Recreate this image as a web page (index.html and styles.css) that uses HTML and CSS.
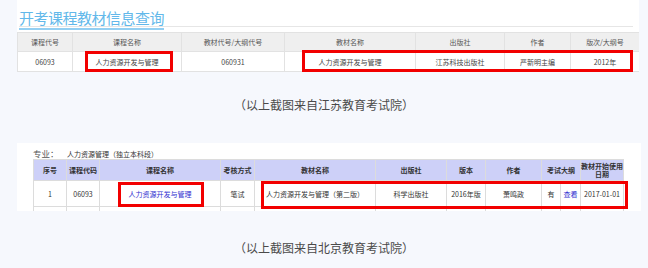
FILE: index.html
```html
<!DOCTYPE html>
<html lang="zh-CN">
<head>
<meta charset="utf-8">
<link rel="stylesheet" href="styles.css">
</head>
<body>
<div class="panel panel-js">
  <div class="title-bar"><span class="title">开考课程教材信息查询</span></div>
  <table class="t1">
    <colgroup>
      <col style="width:55px"><col style="width:109px"><col style="width:103px"><col style="width:131px"><col style="width:89px"><col style="width:66px"><col style="width:69px">
    </colgroup>
    <tr class="head"><th>课程代号</th><th>课程名称</th><th>教材代号/大纲代号</th><th>教材名称</th><th>出版社</th><th>作者</th><th>版次/大纲号</th></tr>
    <tr><td>06093</td><td>人力资源开发与管理</td><td>060931</td><td>人力资源开发与管理</td><td>江苏科技出版社</td><td>严新明主编</td><td>2012年</td></tr>
  </table>
  <div class="mark mark-a"></div>
  <div class="mark mark-b"></div>
</div>
<p class="caption cap1">（以上截图来自江苏教育考试院）</p>
<div class="panel panel-bj">
  <div class="major"><span class="major-label">专业：</span>人力资源管理（独立本科段）</div>
  <table class="t2">
    <colgroup>
      <col style="width:33px"><col style="width:33px"><col style="width:121px"><col style="width:34px"><col style="width:121px"><col style="width:71px"><col style="width:39px"><col style="width:56px"><col style="width:19px"><col style="width:20px"><col style="width:43px">
    </colgroup>
    <tr class="head"><th>序号</th><th>课程代码</th><th>课程名称</th><th>考核方式</th><th>教材名称</th><th>出版社</th><th>版本</th><th>作者</th><th colspan="2">考试大纲</th><th>教材开始使用日期</th></tr>
    <tr class="row"><td>1</td><td>06093</td><td class="link">人力资源开发与管理</td><td>笔试</td><td class="book">人力资源开发与管理（第二版）</td><td>科学出版社</td><td>2016年版</td><td>萧鸣政</td><td>有</td><td class="link">查看</td><td>2017-01-01</td></tr>
    <tr class="row"><td></td><td></td><td></td><td></td><td></td><td></td><td></td><td></td><td></td><td></td><td></td></tr>
  </table>
  <div class="mark mark-c"></div>
  <div class="mark mark-d"></div>
</div>
<p class="caption cap2">（以上截图来自北京教育考试院）</p>
</body>
</html>
```
FILE: styles.css
```css
html, body {
  margin: 0;
  padding: 0;
  background: #f6f8fd;
  font-family: "Noto Sans CJK SC", "Noto Sans", sans-serif;
}
.panel {
  position: relative;
  background: #fff;
  overflow: hidden;
}
.panel-js {
  margin: 0 9px 0 17px;
  height: 72px;
  padding-top: 5px;
  box-sizing: border-box;
}
.title-bar {
  margin: 0 6px 0 2px;
  border-bottom: 1px solid #e6e6e6;
  height: 21px;
}
.title {
  display: inline-block;
  font-size: 15px;
  line-height: 18px;
  color: #62b8ea;
  border-bottom: 2px solid #93cff2;
  height: 19px;
  letter-spacing: -0.5px;
}
.t1 {
  margin-top: 5px;
  width: 622px;
  border-collapse: collapse;
  table-layout: fixed;
  font-size: 7px;
  color: #444;
}
.t1 th, .t1 td {
  border: 1px solid #e2e2e2;
  text-align: center;
  padding: 0;
  white-space: nowrap;
  overflow: hidden;
}
.t1 .head th {
  background: #efefef;
  font-weight: normal;
  color: #555;
  height: 18px;
}
.t1 td {
  height: 19px;
}
.mark {
  position: absolute;
  border: 3px solid #f20000;
  box-sizing: border-box;
}
.mark-a { left: 68px; top: 51px; width: 88px; height: 21px; }
.mark-b { left: 285px; top: 50px; width: 331px; height: 22px; }
.caption {
  margin: 0;
  text-align: center;
  font-size: 12px;
  line-height: 16px;
  color: #4a4a4a;
}
.cap1 { margin-top: 25px; }
.panel-bj {
  margin: 30px 7px 0 17px;
  height: 68px;
  padding: 5px 0 0 16px;
  box-sizing: border-box;
}
.major {
  font-size: 7px;
  line-height: 10px;
  height: 11px;
  color: #333;
}
.major-label {
  font-size: 8.5px;
  color: #555;
  display: inline-block;
  width: 34px;
}
.t2 {
  width: 590px;
  border-collapse: collapse;
  table-layout: fixed;
  font-size: 7px;
  color: #333;
}
.t2 th, .t2 td {
  border: 1px solid #dcdcdc;
  text-align: center;
  padding: 0;
  white-space: nowrap;
}
.t2 .head th {
  background: #cdd0f8;
  font-weight: bold;
  color: #333;
  height: 20px;
  line-height: 8px;
  white-space: normal;
  font-size: 7px;
}
.t2 .row td {
  height: 25px;
}
.t2 td.book {
  text-align: left;
  padding-left: 11px;
}
.t2 td.link {
  color: #3030d0;
}
.mark-c { left: 101px; top: 39px; width: 86px; height: 25px; }
.mark-d { left: 244px; top: 38px; width: 367px; height: 28px; }
.cap2 { margin-top: 29px; }
```
